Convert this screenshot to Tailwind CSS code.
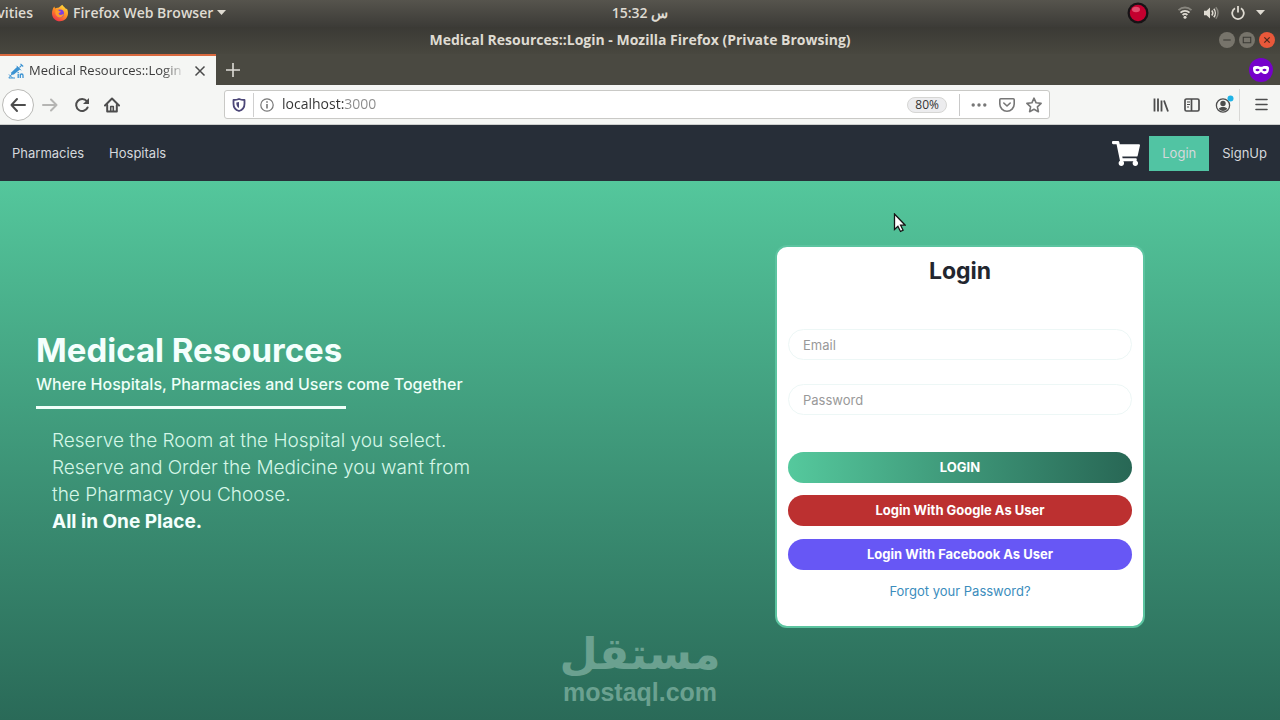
<!DOCTYPE html>
<html lang="en">
<head>
<meta charset="utf-8">
<meta name="viewport" content="width=device-width, initial-scale=1">
<title>Medical Resources::Login</title>
<script src="https://cdn.jsdelivr.net/npm/@tailwindcss/browser@4"></script>
</head>
<body class="relative flex min-h-screen flex-col overflow-x-hidden bg-[#2a6b58] font-['Open_Sans','Noto_Sans',sans-serif] text-[#dfdbd2]">

<!-- Desktop top bar -->
<header class="grid h-[27px] shrink-0 grid-cols-3 items-center bg-linear-to-b from-[#56544d] to-[#3c3b37] pb-[2px] text-[14px] leading-5 font-semibold">
  <div class="flex items-center">
    <button class="flex w-[33px] justify-end overflow-hidden whitespace-nowrap">Activities</button>
    <button class="ml-[18px] flex items-center gap-1 whitespace-nowrap">
      <svg class="size-[18px]" viewBox="0 0 18 18" aria-hidden="true">
        <defs><linearGradient id="fox" x1="0.8" y1="0" x2="0.2" y2="1"><stop offset="0" stop-color="#ffe23d"/><stop offset=".5" stop-color="#ff8a22"/><stop offset="1" stop-color="#f0284f"/></linearGradient></defs>
        <path d="M2.2 4 3.4 2.6 4 4.4C5 3.8 6 3.6 7.200 3.800 8.500 3.600 9.600 1.600 11.500.8 11.400 2.400 14.200 3.300 15.300 5.200L15.800 4.400C17 6.500 17.300 8.500 16.800 11 15.900 14.800 12.800 17.200 9 17.200 4.600 17.200 1 13.800 1 9.400 1 7.200 1.600 5.600 2.200 4Z" fill="url(#fox)"/>
        <circle cx="9" cy="9.500" r="4" fill="#7b3fe0"/>
        <path d="M4.500 6.500C6 5.600 7.600 6 8.500 7.200L10 7.600C9.600 8.700 7.800 8.500 7.600 9.800 8.600 11.600 11.400 11.200 12.800 9.600 12.600 13 9 14.500 6.400 12.800 4.600 11.600 3.900 8.700 4.500 6.500Z" fill="#ff9a2a"/>
      </svg>
      Firefox Web Browser
      <svg class="h-[5px] w-[9px]" viewBox="0 0 9 5" fill="currentColor" aria-hidden="true"><path d="M0 0h9L4.500 5z"/></svg>
    </button>
  </div>
  <time class="text-center">15:32 س</time>
  <div class="flex items-center justify-end pr-[15px]">
    <svg class="mr-[28px] size-[22px]" viewBox="0 0 22 22" role="img" aria-label="Recording">
      <circle cx="11" cy="11" r="10.500" fill="#171316"/><circle cx="11" cy="11" r="8.200" fill="#c4002f"/><ellipse cx="9" cy="7.500" rx="4" ry="2.800" fill="#ef7690" opacity=".65"/>
    </svg>
    <svg class="mr-[10px] h-[13px] w-4" viewBox="0 0 16 13" fill="none" stroke="currentColor" stroke-width="1.800" role="img" aria-label="Wi-Fi">
      <path d="M1.500 4.200C5.200.6 10.800.6 14.500 4.200" opacity=".4"/><path d="M3.500 6.700C6 4.300 10 4.300 12.500 6.700"/><path d="M5.600 9C7 7.700 9 7.700 10.400 9"/><circle cx="8" cy="11.300" r="1.500" fill="currentColor" stroke="none"/>
    </svg>
    <svg class="mr-[12px] h-[14px] w-4" viewBox="0 0 16 14" fill="none" stroke="currentColor" stroke-width="1.500" role="img" aria-label="Volume">
      <path d="M1 4.800h2.500L7 1.500v11L3.500 9.200H1z" fill="currentColor" stroke="none"/><path d="M8.800 4.500C10 6 10 8 8.800 9.500"/><path d="M10.800 2.800C12.800 5.200 12.800 8.800 10.800 11.200"/><path d="M12.800 1.300C15.700 4.500 15.700 9.500 12.800 12.700" opacity=".4"/>
    </svg>
    <svg class="mr-[11px] size-[14px]" viewBox="0 0 14 14" fill="none" stroke="currentColor" stroke-width="1.800" role="img" aria-label="Power">
      <path d="M4 2.300A5.800 5.800 0 1 0 10 2.300"/><path d="M7 0v6.500"/>
    </svg>
    <svg class="h-[5px] w-[9px]" viewBox="0 0 9 5" fill="currentColor" aria-hidden="true"><path d="M0 0h9L4.500 5z"/></svg>
  </div>
</header>

<!-- Window title bar -->
<div class="grid h-[27px] shrink-0 grid-cols-[1fr_auto_1fr] items-center bg-linear-to-b from-[#3b3a35] to-[#48473f] pb-[2px] text-[14px] leading-5 font-bold">
  <h2 class="col-start-2">Medical Resources::Login - Mozilla Firefox (Private Browsing)</h2>
  <div class="flex items-center justify-end gap-1 pr-[5px]">
    <button aria-label="Minimize" class="flex size-4 items-center justify-center rounded-full bg-[#77746b]"><svg class="size-4" viewBox="0 0 15 15" stroke="#3a3934"><path d="M4 7.500h7"/></svg></button>
    <button aria-label="Maximize" class="flex size-4 items-center justify-center rounded-full bg-[#77746b]"><svg class="size-4" viewBox="0 0 15 15" fill="none" stroke="#3a3934"><path d="M4 5h7v5H4z"/></svg></button>
    <button aria-label="Close" class="flex size-4 items-center justify-center rounded-full bg-[#e9583a]"><svg class="size-4" viewBox="0 0 15 15" stroke="#51291d" stroke-width="1.200"><path d="m5 5 5 5m0-5-5 5"/></svg></button>
  </div>
</div>

<!-- Tabs -->
<div class="flex h-[31px] shrink-0 items-center bg-[#4a4941]">
  <div class="flex h-full w-[216px] items-center border-t-2 border-[#d9693f] bg-[#f5f6f4] pr-[10px] pl-2 text-[#3c3c3c]">
    <svg class="mr-[5px] size-4 shrink-0" viewBox="0 0 16 16" fill="none" stroke="#3c93d2" aria-hidden="true">
      <path d="m12.500.8 2.700 2.700M13.800 2.200 11.500 4.500" stroke-width="1.100"/><path d="M9.500 3.500 3.500 9.200 2.800 12l3-.4 6.500-5.300z" fill="#3c93d2" stroke="none"/><path d="m8.500 2.800 4.500 4.500M3.500 11.500.8 15H7M1 11.500 4.500 15" stroke-width="1"/><path d="M10.200 10.800V15M10.200 9v1M12.300 15v-4.200M12.300 12.500c0-2 2.700-2 2.700 0V15" stroke-width="1.300"/>
    </svg>
    <span class="min-w-0 flex-1 overflow-hidden mask-r-from-85% text-[13px] whitespace-nowrap">Medical Resources::Login</span>
    <button aria-label="Close tab" class="ml-2"><svg class="size-3" viewBox="0 0 12 12" stroke="#4b4b4b" stroke-width="1.500"><path d="m1.500 1.500 9 9m0-9-9 9"/></svg></button>
  </div>
  <button aria-label="New tab" class="ml-[10px]"><svg class="size-[14px]" viewBox="0 0 14 14" stroke="#dedcd6" stroke-width="1.600"><path d="M7 0v14M0 7h14"/></svg></button>
  <svg class="mr-[7px] ml-auto size-6" viewBox="0 0 24 24" role="img" aria-label="Private browsing">
    <circle cx="12" cy="12" r="12" fill="#7600cb"/><path fill="#fff" fill-rule="evenodd" d="M4 10C4 8.300 6 8 8 8c1.800 0 2.800.8 4 .8S14.200 8 16 8c2 0 4 .3 4 2 0 3.500-1 6-4.200 6-2.200 0-2.600-1.800-3.800-1.800S10.400 16 8.200 16C5 16 4 13.500 4 10Zm2.300 1.900c1.200 1.700 3.200 1.700 4.400 0-1.200-1.700-3.200-1.700-4.400 0Zm7 0c1.200 1.700 3.200 1.700 4.400 0-1.200-1.700-3.200-1.700-4.400 0Z"/>
  </svg>
</div>

<!-- Browser toolbar -->
<div class="flex h-10 shrink-0 items-center border-b border-[#cdcfcd] bg-[#f5f6f4] text-[#4d4d4d]">
  <div class="flex w-[224px] items-center pl-[2px]">
    <button aria-label="Back" class="flex size-8 items-center justify-center rounded-full border border-[#b9b9b6] bg-white"><svg class="size-4" viewBox="0 0 16 16" fill="none" stroke="currentColor" stroke-width="2" stroke-linecap="round" stroke-linejoin="round"><path d="M15 8H1.500M7 2 1.500 8 7 14"/></svg></button>
    <button aria-label="Forward" class="ml-2"><svg class="size-4" viewBox="0 0 16 16" fill="none" stroke="#b5b5b3" stroke-width="2" stroke-linecap="round" stroke-linejoin="round"><path d="M1 8h13.500M9 2.500 14.500 8 9 13.500"/></svg></button>
    <button aria-label="Reload" class="ml-4"><svg class="size-4" viewBox="0 0 16 16" fill="none" stroke="currentColor" stroke-width="2" stroke-linecap="round"><path d="M13.600 10.500A6 6 0 1 1 12.800 4.200"/><path d="M15 1v6H9z" fill="currentColor" stroke="none"/></svg></button>
    <button aria-label="Home" class="ml-[14px]"><svg class="size-4" viewBox="0 0 16 16" fill="none" stroke="currentColor" stroke-width="2" stroke-linecap="round" stroke-linejoin="round"><path d="M1 8.500 8 1.500l7 7"/><path d="M3.200 8v6.500h9.600V8"/><path d="M6.700 14V9.500h2.600V14" stroke-width="1.600"/></svg></button>
  </div>
  <div class="mr-[103px] flex h-[29px] flex-1 items-center rounded-[3px] border border-[#c9c9c6] bg-white px-[7px]">
    <svg class="size-[14px]" viewBox="0 0 14 14" fill="none" stroke="#4c4778" stroke-width="1.800" stroke-linejoin="round" role="img" aria-label="Tracking protection"><path d="M7 1C5.300 1.800 3.500 2 1.500 2v3.800C1.500 9.500 4 12.200 7 13c3-.8 5.500-3.500 5.500-7.200V2C10.500 2 8.700 1.800 7 1Z"/><path d="M7 4v6C5.200 9.200 4.300 7.600 4.300 4.500 5.300 4.500 6.200 4.300 7 4Z" fill="#4c4778" stroke="none"/></svg>
    <span class="ml-[7px] h-6 w-px bg-[#cfcfcf]"></span>
    <svg class="ml-[6px] size-[14px]" viewBox="0 0 14 14" fill="none" stroke="#777" stroke-width="1.200" role="img" aria-label="Site information"><circle cx="7" cy="7" r="6.200"/><path d="M7 6v4.500M7 3.300v1.500" stroke-width="1.600"/></svg>
    <input type="text" aria-label="Address" value="localhost:3000" class="ml-2 h-5 min-w-0 flex-1 bg-linear-to-r from-[#333] from-[62px] to-[#8b8b8b] to-[62px] bg-clip-text pb-[2px] text-[14px] text-transparent outline-none">
    <button class="h-4 rounded-full border border-[#d6d6d4] bg-[#ececee] px-[7px] text-[12px] leading-[14px] text-[#333]">80%</button>
    <span class="mr-[11px] ml-3 h-[22px] w-px bg-[#c9c9c9]"></span>
    <button aria-label="Page actions"><svg class="h-4 w-4" viewBox="0 0 16 16" fill="#777"><circle cx="2.200" cy="8" r="1.700"/><circle cx="8" cy="8" r="1.700"/><circle cx="13.800" cy="8" r="1.700"/></svg></button>
    <button aria-label="Save to Pocket" class="ml-3"><svg class="size-4" viewBox="0 0 16 16" fill="none" stroke="#777" stroke-width="1.600" stroke-linecap="round" stroke-linejoin="round"><path d="M1.800 1.800h12.400c.6 0 1 .4 1 1V7A7.200 7.200 0 0 1 .8 7V2.800c0-.6.4-1 1-1Z"/><path d="m4.800 6 3.200 3 3.200-3"/></svg></button>
    <button aria-label="Bookmark this page" class="ml-[11px]"><svg class="size-4" viewBox="0 0 16 16" fill="none" stroke="#777" stroke-width="1.600" stroke-linejoin="round"><path d="m8 1.200 2.100 4.600 5 .6-3.700 3.400 1 4.900L8 12.200l-4.400 2.500 1-4.900L.9 6.400l5-.6z"/></svg></button>
  </div>
  <button aria-label="Library"><svg class="size-4" viewBox="0 0 16 16" fill="none" stroke="currentColor" stroke-width="1.800"><path d="M1.500 1.500v13M5 1.500v13M8.500 3.500v11M11 3.500l4 11"/></svg></button>
  <button aria-label="Sidebars" class="ml-[15px]"><svg class="size-4" viewBox="0 0 16 16" fill="none" stroke="currentColor" stroke-width="1.700"><rect x="1" y="2" width="14" height="12" rx="1.500"/><path d="M7.500 2v12"/><path d="M3 5h3M3 7.500h3M3 10h2" stroke-width="1"/></svg></button>
  <button aria-label="Account" class="ml-[14px]"><svg class="h-5 w-[21px]" viewBox="0 0 21 20" fill="none" stroke="currentColor" stroke-width="1.300"><circle cx="9" cy="10.500" r="6.600"/><circle cx="9" cy="8.500" r="2.700" fill="currentColor" stroke="none"/><path d="M4.800 13.700c1.200-2.200 7.200-2.200 8.400 0-2 3-6.400 3-8.400 0Z" fill="currentColor" stroke="none"/><circle cx="16.500" cy="3.500" r="3" fill="#1fb3e6" stroke="none"/></svg></button>
  <span class="ml-1 h-8 w-px bg-[#d8d8d6]"></span>
  <button aria-label="Menu" class="mr-3 ml-[15px]"><svg class="size-[13px]" viewBox="0 0 13 13" stroke="currentColor" stroke-width="1.600" stroke-linecap="round"><path d="M1 1.500h11M1 6.500h11M1 11.500h11"/></svg></button>
</div>

<!-- Site navigation -->
<nav class="flex h-14 shrink-0 items-center bg-[#272e38] font-['Inter',sans-serif] text-[13px] leading-[19px] text-[#d5d8dc]">
  <a href="#" class="px-3 py-2">Pharmacies</a>
  <a href="#" class="px-[13px] py-2">Hospitals</a>
  <a href="#" aria-label="Cart" class="mr-[9px] ml-auto text-white"><svg class="h-[25px] w-7" viewBox="0 0 576 512" fill="currentColor"><path d="M528.120 301.319l47.273-208C578.806 78.301 567.391 64 551.990 64H159.208l-9.166-44.810C147.758 8.021 137.930 0 126.529 0H24C10.745 0 0 10.745 0 24v16c0 13.255 10.745 24 24 24h69.883l70.248 343.435C147.325 417.100 136 435.222 136 456c0 30.928 25.072 56 56 56s56-25.072 56-56c0-15.674-6.447-29.835-16.824-40h209.647C430.447 426.165 424 440.326 424 456c0 30.928 25.072 56 56 56s56-25.072 56-56c0-22.172-12.888-41.332-31.579-50.405l5.517-24.276c3.413-15.018-8.002-29.319-23.403-29.319H218.117l-6.545-32h293.145c11.206 0 20.920-7.754 23.403-18.681z"/></svg></a>
  <a href="#" class="bg-[#51c4a3] px-[13px] py-2">Login</a>
  <a href="#" class="px-[13px] py-2">SignUp</a>
</nav>

<!-- Page content -->
<main class="grid flex-1 grid-cols-2 items-center bg-linear-to-b from-[#54c79c] to-[#2a6a58] pb-7 font-['Inter',sans-serif]">
  <section class="pb-2 pl-9 text-[#effff8]">
    <h1 class="text-[33px] leading-10 font-bold text-[#f4fffd]">Medical Resources</h1>
    <p class="text-[16px] leading-7 font-medium">Where Hospitals, Pharmacies and Users come Together</p>
    <div class="mt-2 h-[3px] w-[310px] bg-[#f0fff9]"></div>
    <div class="mt-[18px] ml-4 max-w-[440px] text-[19px] leading-[27px] font-light text-[#d5f7e8]">
      <p>Reserve the Room at the Hospital you select.</p>
      <p>Reserve and Order the Medicine you want from<br>the Pharmacy you Choose.</p>
      <p class="font-bold text-[#f4fffd]">All in One Place.</p>
    </div>
  </section>

  <form class="mx-auto flex w-full max-w-[370px] flex-col rounded-xl border-2 border-[#5cc4a0] bg-white px-[11px] pt-2 pb-[25px] text-[13px]">
    <h2 class="text-center text-[23px] leading-8 font-bold text-[#22262f]">Login</h2>
    <input type="email" aria-label="Email" placeholder="Email" class="mt-[42px] h-[31px] rounded-full border border-[#edf7f6] px-[14px] text-[#333] placeholder:text-[#999] outline-none">
    <input type="password" aria-label="Password" placeholder="Password" class="mt-6 h-[31px] rounded-full border border-[#edf7f6] px-[14px] text-[#333] placeholder:text-[#999] outline-none">
    <button type="submit" class="mt-[37px] h-[31px] rounded-full bg-linear-to-r from-[#55c99d] to-[#286755] font-bold text-white">LOGIN</button>
    <button type="button" class="mt-3 h-[31px] rounded-full bg-[#bc3030] font-bold text-white">Login With Google As User</button>
    <button type="button" class="mt-[13px] h-[31px] rounded-full bg-[#6757f5] font-bold text-white">Login With Facebook As User</button>
    <a href="#" class="mt-[11px] self-center leading-5 text-[#3b8dbd]">Forgot your Password?</a>
  </form>
</main>

<!-- Watermark and pointer lie over the page -->
<div class="pointer-events-none absolute bottom-[14px] left-1/2 flex -translate-x-1/2 flex-col items-center text-[#6ba190]">
  <span lang="ar" dir="rtl" class="font-['DejaVu_Sans',sans-serif] text-[44px] leading-[48px] font-bold">مستقل</span>
  <span class="font-['Liberation_Sans',sans-serif] text-[25px] leading-7 font-bold">mostaql.com</span>
</div>
<svg class="pointer-events-none absolute top-[213px] left-[893px] h-5 w-[13px]" viewBox="0 0 13 20" aria-hidden="true"><path d="M1.500 1v15.500l3.400-3.200 2.600 5.200 2.600-1.300-2.500-5h4.600z" fill="#fff" stroke="#151515" stroke-width="1.300"/></svg>
</body>
</html>
